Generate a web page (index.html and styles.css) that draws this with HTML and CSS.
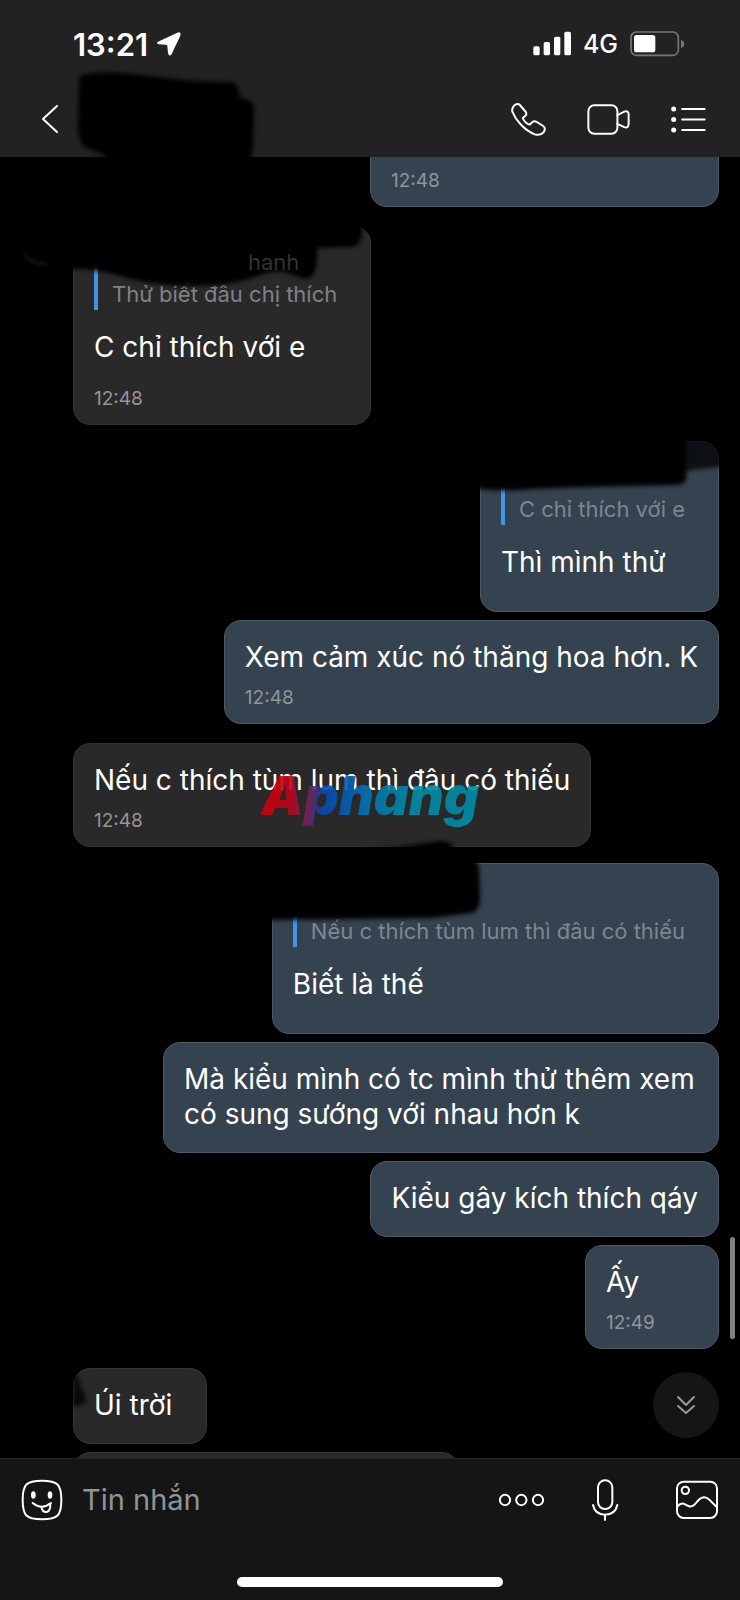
FILE: index.html
```html
<!DOCTYPE html>
<html lang="vi">
<head>
<meta charset="utf-8">
<meta name="viewport" content="width=device-width, initial-scale=1">
<title>Tin nhắn</title>
<link rel="stylesheet" href="styles.css">
</head>
<body>
<div class="app">
  <header class="top">
    <div class="status">
      <span class="clock">13:21</span>
      <svg class="locate" width="26" height="26" viewBox="468 94 78 78"><path d="M474 126 L532 99 Q544 94 541 108 L515 163 Q508 173 504 161 L502 138 Q501 135 497 135 L477 134 Q467 131 474 126Z" fill="#fff"/></svg>
      <span class="spacer"></span>
      <svg width="38" height="26" viewBox="488 93 114 78"><g fill="#fff"><rect x="489" y="139" width="19" height="27" rx="5"/><rect x="520" y="126" width="19" height="40" rx="5"/><rect x="551" y="110" width="19" height="56" rx="5"/><rect x="582" y="95" width="20" height="71" rx="5"/></g></svg>
      <span class="network">4G</span>
      <svg width="55" height="26" viewBox="779 92 165 78"><rect x="782" y="95" width="142" height="70" rx="16" fill="none" stroke="#777" stroke-width="5"/><rect x="791" y="104" width="64" height="52" rx="8" fill="#fff"/><path d="M932 119 Q942 123 942 131 Q942 139 932 143Z" fill="#777"/></svg>
    </div>
    <nav class="nav">
      <button class="icon" aria-label="Quay lại"><svg width="18" height="30" viewBox="0 0 18 30"><path d="M16 2 L2 15 L16 28" class="line"/></svg></button>
      <svg class="mark mark-title" width="200" height="94" viewBox="0 0 200 94"><path d="M8 8 Q14 3 50 4 L104 10 Q118 13 160 13 Q167 16 168 29 Q181 30 182 39 L181 80 Q179 92 172 94 L36 94 Q34 84 16 80 Q8 78 6 60 L7 18Z"/></svg>
      <span class="spacer"></span>
      <button class="icon" aria-label="Gọi thoại"><svg width="37" height="35" viewBox="420 305 110 105"><path class="line3" d="M428 322 C432 311 444 308 449 314 L467 335 C470 340 469 343 465 347 L458 353 C460 361 470 370 478 373 L486 366 C490 362 495 362 500 365 L519 377 C526 382 525 390 520 396 C514 403 504 405 494 402 C462 390 436 358 427 335 C425 330 426 326 428 322Z"/></svg></button>
      <button class="icon" aria-label="Gọi video"><svg width="45" height="33" viewBox="646 308 136 100"><rect class="line3" x="653" y="315" width="88" height="86" rx="18"/><path class="line3" d="M741 345 L762 334 Q775 330 775 343 V372 Q775 385 762 381 L741 371"/></svg></button>
      <button class="icon" aria-label="Tùy chọn"><svg width="37" height="29" viewBox="900 314 110 86"><g fill="#fff"><circle cx="911" cy="326" r="7.500"/><circle cx="911" cy="357" r="7.500"/><circle cx="911" cy="388" r="7.500"/></g><path class="line3" d="M936 326H1003M936 357H1003M936 388H1003"/></svg></button>
    </nav>
  </header>

  <main class="chat">
    <article class="bubble mine cut-top"><time class="time">12:48</time></article>

    <article class="bubble theirs turn-left">
      <blockquote class="quote"><span class="who">hanh</span><span>Thử biết đâu chị thích</span></blockquote>
      <p class="text">C chỉ thích với e</p>
      <time class="time">12:48</time>
      <svg class="mark mark-quote-a" width="350" height="80" viewBox="0 0 350 80"><path d="M0 0 L330 0 Q335 10 330 20 Q328 26 318 26 L287 27 Q288 46 283 54 Q278 60 268 56 Q250 46 230 54 Q205 65 160 65 Q120 64 90 55 Q70 48 40 48 L0 48Z"/><path d="M-6 32 Q0 44 17 43" fill="none" stroke="#54473a" stroke-width="1"/></svg>
    </article>

    <article class="bubble mine turn-right">
      <blockquote class="quote"><span class="who"></span><span>C chỉ thích với e</span></blockquote>
      <p class="text">Thì mình thử</p>
      <svg class="mark mark-quote-b" width="260" height="64" viewBox="0 0 260 64"><path class="haze" d="M200 0H260V36Q235 38 212 42Z"/><path d="M0 0 H217 V50 Q214 55 205 55 L120 57 Q80 58 50 60 Q20 62 0 56Z"/></svg>
    </article>

    <article class="bubble mine"><p class="text">Xem cảm xúc nó thăng hoa hơn. K</p><time class="time">12:48</time></article>

    <article class="bubble theirs turn-left">
      <p class="text">Nếu c thích tùm lum thì đâu có thiếu</p><time class="time">12:48</time>
      <span class="brand">Aphang</span>
    </article>

    <article class="bubble mine turn-right">
      <blockquote class="quote"><span class="who"></span><span>Nếu c thích tùm lum thì đâu có thiếu</span></blockquote>
      <p class="text">Biết là thế</p>
      <svg class="mark mark-quote-c" width="230" height="92" viewBox="0 0 230 92"><path d="M-4 22 L100 14 Q140 10 168 5 Q180 4 182 12 L184 22 Q206 22 208 30 L209 64 Q208 75 201 77 L160 82 L-4 84Z"/></svg>
    </article>

    <article class="bubble mine wide"><p class="text">Mà kiểu mình có tc mình thử thêm xem<br>có sung sướng với nhau hơn k</p></article>
    <article class="bubble mine"><p class="text">Kiểu gây kích thích qáy</p></article>
    <article class="bubble mine short"><p class="text">Ấy</p><time class="time">12:49</time></article>

    <article class="bubble theirs short turn-left">
      <p class="text">Úi trời</p>
      <svg class="mark mark-corner" width="24" height="50" viewBox="0 0 24 50"><path class="haze" d="M0 4 Q6 6 8 18 Q13 26 13 33 Q12 37 0 37Z"/></svg>
    </article>
    <article class="bubble theirs next"></article>

    <div class="scrollbar"></div>
    <button class="jump" aria-label="Xuống cuối"><svg width="20" height="20" viewBox="0 0 20 20"><path d="M2 2l8 8 8-8M2 11l8 7 8-7" fill="none" stroke="#999" stroke-width="2" stroke-linecap="round" stroke-linejoin="round"/></svg></button>
  </main>

  <footer class="composer">
    <div class="entry">
      <button class="icon" aria-label="Nhãn dán"><svg width="42" height="42" viewBox="62 416 126 126"><path class="line3" d="M125 421 C172 421 183 432 183 479 C183 526 172 537 125 537 C78 537 67 526 67 479 C67 432 78 421 125 421Z"/><g fill="#fff"><ellipse cx="99" cy="464" rx="7" ry="11"/><ellipse cx="149" cy="464" rx="7" ry="11"/></g><path class="line3" d="M97 488 Q124 510 152 488M124 502 Q126 516 139 515 Q151 512 150 491"/></svg></button>
      <input class="field" type="text" placeholder="Tin nhắn" aria-label="Tin nhắn">
      <button class="icon" aria-label="Thêm"><svg width="48" height="16" viewBox="386 816 144 48"><g class="line3"><circle cx="407" cy="840" r="15.500"/><circle cx="456" cy="840" r="15.500"/><circle cx="506" cy="840" r="15.500"/></g></svg></button>
      <button class="icon mic" aria-label="Ghi âm"><svg width="28" height="44" viewBox="663 778 84 132"><rect class="line3" x="684" y="785" width="43" height="86" rx="21"/><path class="line3" d="M669 859 Q675 888 705 888 Q736 888 742 859M705 888V904"/></svg></button>
      <button class="icon" aria-label="Ảnh"><svg width="44" height="40" viewBox="915 780 132 120"><rect class="line3" x="921" y="785" width="120" height="109" rx="20"/><circle class="line3" cx="946" cy="811" r="11"/><path class="line3" d="M922 860 Q934 846 945 853 L955 858 Q967 863 978 849 Q998 820 1019 840 L1041 862"/></svg></button>
    </div>
    <div class="home"></div>
  </footer>
</div>
</body>
</html>
```

FILE: styles.css
```css
* { box-sizing: border-box; }

body {
  margin: 0;
  background: #000;
  color: #fff;
  font-family: Inter, "Noto Sans", sans-serif;
}

.app {
  display: flex;
  flex-direction: column;
  height: 100vh;
}

.top {
  background: #222;
  flex: none;
}

.status {
  display: flex;
  align-items: center;
  height: 81px;
  padding: 7px 55px 0 73px;
}

.clock {
  font-size: 31px;
  font-weight: 600;
}

.locate { margin-left: 8px; }

.spacer { flex: 1; }

.network {
  margin: 0 12px;
  font-size: 25px;
  font-weight: 500;
}

.nav {
  position: relative;
  display: flex;
  align-items: center;
  gap: 39px;
  height: 76px;
  padding: 0 33px 0 41px;
}

.icon {
  display: flex;
  flex: none;
  padding: 0;
  border: 0;
  background: none;
}

.line, .line3 {
  fill: none;
  stroke: #fff;
  stroke-width: 2;
  stroke-linecap: round;
  stroke-linejoin: round;
}

.line3 { stroke-width: 6; }

/* Painted-over areas */
.mark {
  position: absolute;
  overflow: visible;
  filter: blur(2px);
  pointer-events: none;
}

.haze { fill-opacity: 0.75; }
.mark-title { left: 72px; top: -12px; }
.mark-quote-a { left: -44px; top: -6px; }
.mark-quote-b { left: -12px; top: -12px; }
.mark-quote-c { left: -2px; top: -28px; }
.mark-corner { left: -1px; top: 0; }

.chat {
  position: relative;
  display: flex;
  flex: 1;
  flex-direction: column;
  gap: 8px;
  min-height: 0;
  padding: 0 21px 0 73px;
  overflow: hidden;
}

.bubble {
  position: relative;
  display: flex;
  flex: none;
  flex-direction: column;
  padding: 19px 20px 20px;
  border: 1px solid;
  border-radius: 17px;
}

.bubble:has(.time) { padding-bottom: 14px; }

.mine {
  align-self: flex-end;
  background: #35424f;
  border-color: #4e5a67;
}

.theirs {
  align-self: flex-start;
  background: #292929;
  border-color: #333;
}

.turn-left { margin-top: 11px; }
.turn-right { margin-top: 8px; }
.short { min-width: 134px; }
.wide { min-width: 556px; }

.cut-top {
  width: 349px;
  padding-top: 13px;
  border-top: 0;
  border-radius: 0 0 17px 17px;
}

.next {
  width: 386px;
  height: 60px;
}

.text {
  margin: 0;
  font-size: 28px;
  line-height: 35px;
}

.time {
  font-size: 19px;
  line-height: 22px;
  color: #8f969c;
}

.theirs .time { color: #959595; }

.text + .time { margin-top: 12px; }

.quote {
  display: flex;
  flex-direction: column;
  margin: 0 0 20px;
  padding: 0 13px 0 14px;
  border-left: 4px solid #3d96ec;
  font-size: 22px;
  line-height: 32px;
  color: #7d8790;
}

.quote + .text { margin-bottom: 11px; }

.theirs .quote { color: #7f8386; }

.quote .who {
  position: relative;
  z-index: 1;
  height: 32px;
  padding-right: 38px;
  color: #333;
  text-align: right;
}

.brand {
  position: absolute;
  left: 187px;
  top: 20px;
  padding-right: 6px;
  font-size: 54px;
  font-style: italic;
  font-weight: 900;
  line-height: 64px;
  color: transparent;
  background: linear-gradient(95deg, #c90010 12%, #7b2050 22%, #0648b0 28%, #0473b4 48%, #008ca6 65%);
  background-clip: text;
  opacity: 0.9;
}

.scrollbar {
  position: absolute;
  right: 5px;
  bottom: 119px;
  width: 5px;
  height: 102px;
  border-radius: 3px;
  background: #808080;
}

.jump {
  position: absolute;
  right: 21px;
  bottom: 20px;
  display: grid;
  place-items: center;
  width: 66px;
  height: 66px;
  padding: 0;
  border: 0;
  border-radius: 50%;
  background: #151515;
}

.composer {
  display: flex;
  flex: none;
  flex-direction: column;
  gap: 37px;
  padding: 0 21px 13px;
  border-top: 1px solid #242424;
  background: #151515;
}

.entry {
  display: flex;
  align-items: center;
  height: 81px;
}

.field {
  flex: 1;
  min-width: 0;
  height: 48px;
  margin: 0 16px 0 19px;
  padding: 0;
  border: 0;
  outline: 0;
  background: none;
  color: #fff;
  font: 29px Inter, "Noto Sans", sans-serif;
}

.field::placeholder { color: #8d9598; opacity: 1; }

.mic { margin: 0 56px 0 45px; }

.home {
  align-self: center;
  width: 38%;
  height: 10px;
  border-radius: 5px;
  background: #fff;
}
```
